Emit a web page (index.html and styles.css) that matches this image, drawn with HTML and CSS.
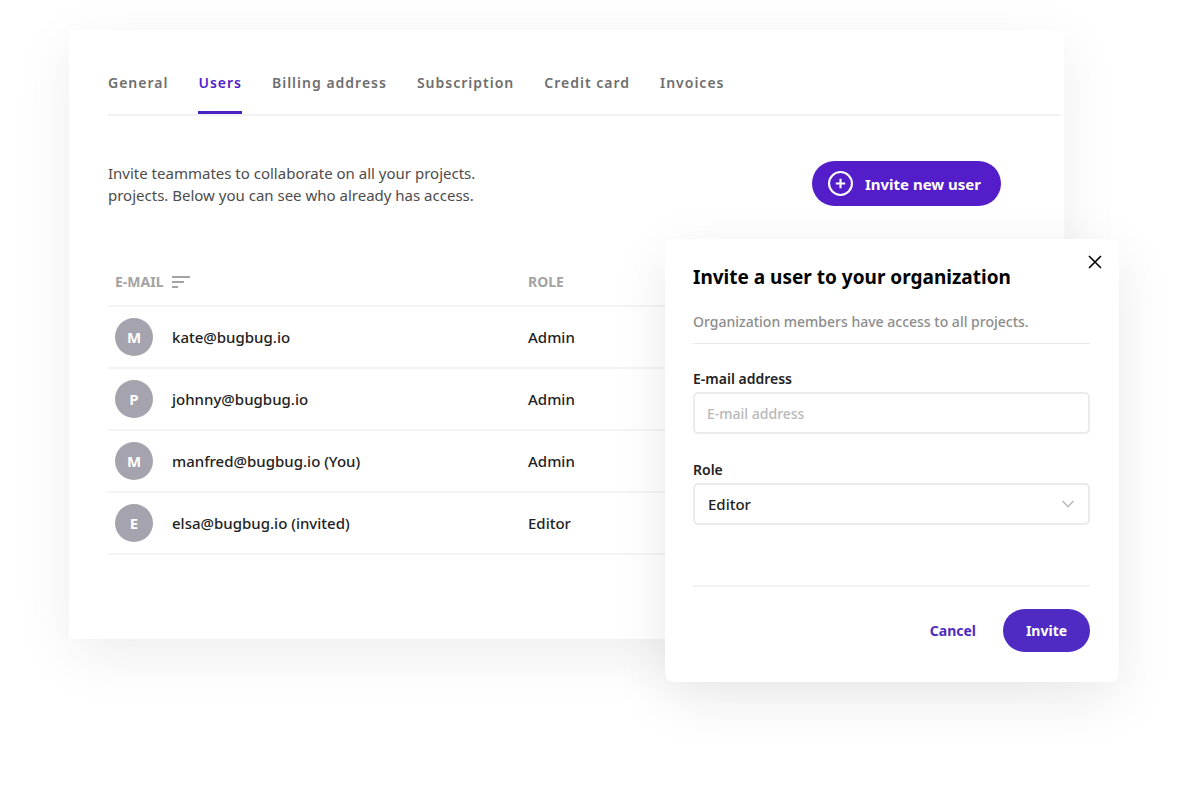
FILE: index.html
```
<!DOCTYPE html>
<html lang="en">
<head>
<meta charset="utf-8">
<meta name="viewport" content="width=device-width, initial-scale=1">
<title>Organization users</title>
<link rel="stylesheet" href="styles.css">
</head>
<body>
<div class="stage">
  <main class="panel">
    <nav class="tabs" aria-label="Organization settings">
      <a class="tab" href="#general">General</a>
      <a class="tab tab-active" href="#users" aria-current="page">Users</a>
      <a class="tab" href="#billing">Billing address</a>
      <a class="tab" href="#subscription">Subscription</a>
      <a class="tab" href="#card">Credit card</a>
      <a class="tab" href="#invoices">Invoices</a>
    </nav>
    <div class="intro">
      <p class="intro-text">Invite teammates to collaborate on all your projects.<br>projects. Below you can see who already has access.</p>
      <button class="button button-new" type="button">
        <svg class="plus-icon" viewBox="0 0 24 24" aria-hidden="true"><circle cx="12" cy="12" r="11"/><path d="M12 7.5v9M7.5 12h9"/></svg>
        Invite new user
      </button>
    </div>
    <table class="users">
      <thead>
        <tr>
          <th scope="col"><span class="sort-head">E-MAIL <svg class="sort-icon" viewBox="0 0 19 14" aria-hidden="true"><path d="M1 2h18M1 7h12M1 12h6"/></svg></span></th>
          <th scope="col">ROLE</th>
        </tr>
      </thead>
      <tbody>
        <tr><td><div class="user"><span class="avatar">M</span><span>kate@bugbug.io</span></div></td><td>Admin</td></tr>
        <tr><td><div class="user"><span class="avatar">P</span><span>johnny@bugbug.io</span></div></td><td>Admin</td></tr>
        <tr><td><div class="user"><span class="avatar">M</span><span>manfred@bugbug.io (You)</span></div></td><td>Admin</td></tr>
        <tr><td><div class="user"><span class="avatar">E</span><span>elsa@bugbug.io (invited)</span></div></td><td>Editor</td></tr>
      </tbody>
    </table>
  </main>
  <form class="dialog" role="dialog" aria-labelledby="dialog-title">
    <button class="close" type="button" aria-label="Close"><svg class="close-icon" viewBox="0 0 14 14" aria-hidden="true"><path d="M1 1l12 12M13 1L1 13"/></svg></button>
    <header class="dialog-head">
      <h2 class="dialog-title" id="dialog-title">Invite a user to your organization</h2>
      <p class="dialog-note">Organization members have access to all projects.</p>
    </header>
    <div class="fields">
      <div class="field">
        <label class="label" for="email">E-mail address</label>
        <input class="control" id="email" type="email" placeholder="E-mail address">
      </div>
      <div class="field">
        <label class="label" for="role">Role</label>
        <div class="select-wrap">
          <select class="control select" id="role"><option>Editor</option><option>Admin</option></select>
          <svg class="chevron" viewBox="0 0 12 8" aria-hidden="true"><path d="M.5 1L6 6.7 11.5 1"/></svg>
        </div>
      </div>
    </div>
    <footer class="dialog-foot">
      <button class="button button-text" type="button">Cancel</button>
      <button class="button button-submit" type="submit">Invite</button>
    </footer>
  </form>
</div>
</body>
</html>
```
FILE: styles.css
```
* {
  box-sizing: border-box;
}

body {
  margin: 0;
  background: #fff;
  color: #222;
  font: 500 15px/22px "Noto Sans", "Open Sans", sans-serif;
}

button,
input,
select {
  font: inherit;
}

p,
h2 {
  margin: 0;
}

.stage {
  position: relative;
  min-height: 100vh;
  padding: 30px 136px 148px 69px;
}

.panel {
  padding: 30px 3px 84px 39px;
  background: #fff;
  box-shadow: 0 16px 56px rgba(0, 0, 0, 0.07);
}

.tabs {
  display: flex;
  gap: 30px;
  border-bottom: 2px solid #f2f2f2;
}

.tab {
  padding: 12px 0 17px;
  border-bottom: 3px solid transparent;
  color: #6e6e6e;
  font-size: 14px;
  font-weight: 600;
  letter-spacing: 1px;
  text-decoration: none;
}

.tab-active {
  border-color: #4a22c4;
  color: #4f1fce;
}

.intro {
  display: flex;
  align-items: center;
  justify-content: space-between;
  padding: 45px 60px 52px 0;
}

.intro-text {
  color: #4c4c4c;
  font-weight: 400;
}

.button {
  display: inline-flex;
  align-items: center;
  justify-content: center;
  border: 0;
  border-radius: 24px;
  background: #4f2bc3;
  color: #fff;
  font-weight: 700;
  cursor: pointer;
}

.button-new {
  gap: 12px;
  height: 45px;
  padding: 0 20px 0 16px;
  background: #531dc9;
}

.plus-icon {
  width: 25px;
  height: 25px;
  fill: none;
  stroke: #fff;
  stroke-width: 2;
}

.users {
  width: 100%;
  border-collapse: collapse;
  table-layout: fixed;
}

.users th,
.users td {
  height: 62px;
  padding: 0 7px;
  border-bottom: 2px solid #f4f4f4;
  text-align: left;
}

.users th {
  height: 48px;
  color: #a3a3a3;
  font-size: 14px;
  font-weight: 700;
}

.users th:first-child {
  width: 413px;
}

.sort-head {
  display: flex;
  align-items: center;
  gap: 8px;
}

.sort-icon {
  width: 19px;
  height: 14px;
  fill: none;
  stroke: #a3a3a3;
  stroke-width: 2;
}

.user {
  display: flex;
  align-items: center;
  gap: 19px;
}

.avatar {
  display: grid;
  place-items: center;
  width: 38px;
  height: 38px;
  border-radius: 50%;
  background: #a5a3ad;
  color: #fff;
  font-weight: 700;
}

.dialog {
  position: absolute;
  top: 239px;
  right: 81px;
  width: 454px;
  padding: 24px 29px 30px 28px;
  border-radius: 8px;
  background: #fff;
  box-shadow: 0 16px 56px rgba(0, 0, 0, 0.09);
}

.close {
  position: absolute;
  top: 11px;
  right: 12px;
  display: grid;
  place-items: center;
  width: 24px;
  height: 24px;
  padding: 0;
  border: 0;
  background: none;
  cursor: pointer;
}

.close-icon {
  width: 14px;
  height: 14px;
  fill: none;
  stroke: #000;
  stroke-width: 1.6;
}

.dialog-head {
  padding-bottom: 10px;
  border-bottom: 1px solid #e8e8e8;
}

.dialog-title {
  margin-bottom: 20px;
  color: #000;
  font-size: 19px;
  font-weight: 700;
  line-height: 28px;
}

.dialog-note {
  color: #8c8c8c;
  font-size: 14px;
}

.fields {
  display: grid;
  gap: 25px;
  padding: 24px 0 60px;
}

.label {
  display: block;
  margin-bottom: 2px;
  font-size: 14px;
  font-weight: 600;
}

.control {
  display: block;
  width: 100%;
  height: 42px;
  padding: 0 12px;
  border: 2px solid #ebebeb;
  border-radius: 5px;
  background: #fff;
  color: #222;
}

.control::placeholder {
  color: #b8b8b8;
  font-size: 14px;
  opacity: 1;
}

.select-wrap {
  position: relative;
}

.select {
  padding: 0 13px;
  appearance: none;
}

.chevron {
  position: absolute;
  top: 17px;
  right: 16px;
  width: 12px;
  height: 8px;
  fill: none;
  stroke: #b8b8b8;
  stroke-width: 1.5;
  pointer-events: none;
}

.dialog-foot {
  display: flex;
  justify-content: flex-end;
  gap: 27px;
  padding-top: 22px;
  border-top: 2px solid #f2f2f2;
}

.button-text {
  padding: 0;
  background: none;
  color: #4f2bc3;
  font-size: 14px;
}

.button-submit {
  width: 87px;
  height: 43px;
  font-size: 14px;
}
```
